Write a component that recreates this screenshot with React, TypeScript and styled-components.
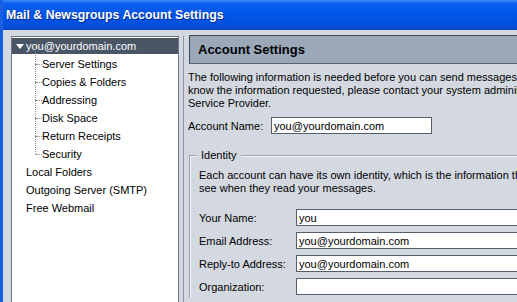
import styled, { createGlobalStyle } from "styled-components";

const GlobalStyle = createGlobalStyle`
    html, body {
        margin: 0;
        padding: 0;
        overflow: hidden;
        background: #d4d9e1;
    }
`;

const Window = styled.div`
    width: 517px;
    height: 302px;
    display: flex;
    flex-direction: column;
    overflow: hidden;
    font-family: "Liberation Sans", Arial, sans-serif;
    font-size: 11px;
    color: #000;
    background: #d4d9e1;
    border-left: 3px solid #1a5fe0;
    box-sizing: border-box;
`;

const TitleBar = styled.div`
    height: 30px;
    flex-shrink: 0;
    margin-left: -3px;
    display: flex;
    align-items: center;
    padding-left: 6px;
    background: linear-gradient(
        to bottom,
        #3c8cf8 0%,
        #0a5ff0 12%,
        #0055e8 50%,
        #0250dc 85%,
        #0a48c8 100%
    );
    color: #fff;
    font-weight: bold;
    font-size: 12.3px;
    text-shadow: 1px 1px 0 #0a2a8a;
`;

const Body = styled.div`
    flex: 1;
    display: flex;
    padding: 6px 0 0 8px;
    min-height: 0;
`;

const TreePanel = styled.div`
    width: 166px;
    flex-shrink: 0;
    background: #fff;
    border: 1px solid #6d7684;
    border-bottom: none;
    padding-top: 1px;
`;

const TreeRow = styled.div<{ $indent?: boolean; $selected?: boolean }>`
    position: relative;
    height: 18px;
    display: flex;
    align-items: center;
    padding-left: ${(p) => (p.$indent ? 30 : 14)}px;
    white-space: nowrap;
    ${(p) =>
        p.$selected &&
        `
        height: 16px;
        margin-bottom: 1px;
        background: #4a5566;
        color: #fff;
        padding-left: 14px;
    `}
    ${(p) =>
        p.$indent &&
        `
        &::before {
            content: "";
            position: absolute;
            left: 23px;
            top: -9px;
            height: 18px;
            border-left: 1px dotted #8a8a8a;
        }
        &::after {
            content: "";
            position: absolute;
            left: 24px;
            top: 9px;
            width: 6px;
            border-top: 1px dotted #8a8a8a;
        }
    `}
`;

const Twisty = styled.span`
    position: absolute;
    left: 4px;
    top: 6px;
    width: 0;
    height: 0;
    border-left: 4px solid transparent;
    border-right: 4px solid transparent;
    border-top: 5px solid #fff;
`;

const RightPane = styled.div`
    flex-shrink: 0;
    width: 360px;
    margin-left: 4px;
    border-left: 1px solid #8d96a3;
    padding-left: 5px;
`;

const Header = styled.div`
    height: 27px;
    margin-top: -1px;
    display: flex;
    align-items: center;
    padding-left: 8px;
    background: #9ba8b8;
    border-top: 1px solid #3e4957;
    border-left: 1px solid #3e4957;
    border-bottom: 1px solid #5a6574;
    font-weight: bold;
    font-size: 13px;
`;

const Intro = styled.p`
    margin: 7px 0 0 -1px;
    line-height: 13px;
    white-space: nowrap;
`;

const FieldRow = styled.div<{ $labelWidth: number }>`
    display: grid;
    grid-template-columns: ${(p) => p.$labelWidth}px 1fr;
    align-items: center;
    height: 23px;
`;

const Label = styled.span`
    white-space: nowrap;
`;

const TextInput = styled.div<{ $width?: number }>`
    height: 15px;
    width: ${(p) => (p.$width ? `${p.$width}px` : "auto")};
    background: #fff;
    border: 1px solid #555e6b;
    display: flex;
    align-items: center;
    padding-left: 2px;
    font-size: 11px;
    white-space: nowrap;
`;

const AccountRow = styled.div`
    margin: 4px 0 0 -1px;
`;

const GroupBox = styled.fieldset`
    margin: 12px 0 0 0;
    padding: 6px 0 0 9px;
    border: none;
    border-top: 1px solid #98a2ae;
    border-left: 1px solid #98a2ae;
    box-shadow: inset 1px 1px 0 #f2f4f7;
    min-width: 0;
`;

const Legend = styled.legend`
    padding: 0 5px;
    margin-left: -3px;
    font-size: 11px;
    background: #d4d9e1;
`;

const GroupText = styled.p`
    margin: 2px 0 11px 0;
    line-height: 13px;
    white-space: nowrap;
`;

const treeChildren = [
    "Server Settings",
    "Copies & Folders",
    "Addressing",
    "Disk Space",
    "Return Receipts",
    "Security",
];

const topLevel = ["Local Folders", "Outgoing Server (SMTP)", "Free Webmail"];

const identity = [
    { label: "Your Name:", value: "you" },
    { label: "Email Address:", value: "you@yourdomain.com" },
    { label: "Reply-to Address:", value: "you@yourdomain.com" },
    { label: "Organization:", value: "" },
];

export default function App() {
    return (
        <>
            <GlobalStyle />
            <Window>
                <TitleBar>Mail &amp; Newsgroups Account Settings</TitleBar>
                <Body>
                    <TreePanel>
                        <TreeRow $selected>
                            <Twisty />
                            you@yourdomain.com
                        </TreeRow>
                        {treeChildren.map((name) => (
                            <TreeRow key={name} $indent>
                                {name}
                            </TreeRow>
                        ))}
                        {topLevel.map((name) => (
                            <TreeRow key={name}>{name}</TreeRow>
                        ))}
                    </TreePanel>
                    <RightPane>
                        <Header>Account Settings</Header>
                        <Intro>
                            The following information is needed before you can send
                            messages. If you do not
                            <br />
                            know the information requested, please contact your system
                            administrator or Internet
                            <br />
                            Service Provider.
                        </Intro>
                        <AccountRow>
                            <FieldRow $labelWidth={83}>
                                <Label>Account Name:</Label>
                                <TextInput $width={157}>you@yourdomain.com</TextInput>
                            </FieldRow>
                        </AccountRow>
                        <GroupBox>
                            <Legend>Identity</Legend>
                            <GroupText>
                                Each account can have its own identity, which is the
                                information that other people
                                <br />
                                see when they read your messages.
                            </GroupText>
                            {identity.map((f) => (
                                <FieldRow key={f.label} $labelWidth={97}>
                                    <Label>{f.label}</Label>
                                    <TextInput>{f.value}</TextInput>
                                </FieldRow>
                            ))}
                        </GroupBox>
                    </RightPane>
                </Body>
            </Window>
        </>
    );
}
